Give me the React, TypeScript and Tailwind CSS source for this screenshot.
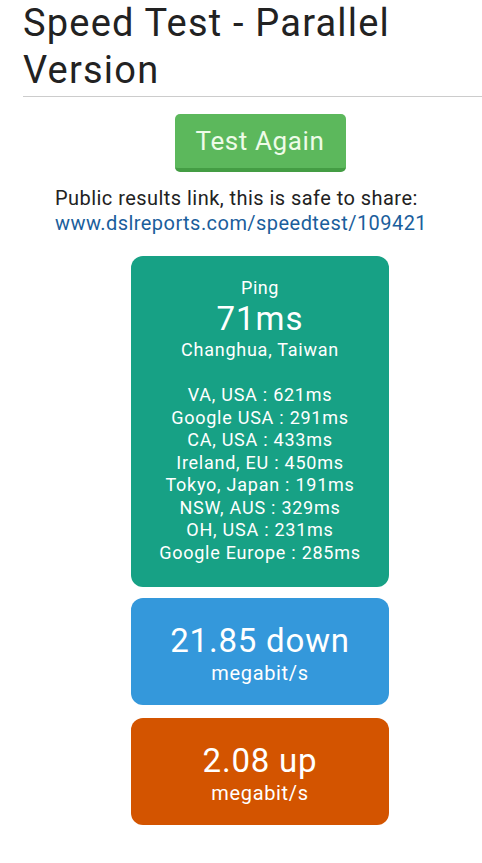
const pings = [
  ["VA, USA", "621ms"],
  ["Google USA", "291ms"],
  ["CA, USA", "433ms"],
  ["Ireland, EU", "450ms"],
  ["Tokyo, Japan", "191ms"],
  ["NSW, AUS", "329ms"],
  ["OH, USA", "231ms"],
  ["Google Europe", "285ms"],
];

function ResultCard({
  color,
  className = "",
  children,
}: {
  color: string;
  className?: string;
  children: React.ReactNode;
}) {
  return (
    <div
      className={`mx-auto w-[258px] rounded-[12px] text-center text-white ${color} ${className}`}
    >
      {children}
    </div>
  );
}

export default function App() {
  return (
    <div className="min-h-[863px] w-[482px] overflow-hidden bg-white font-['Roboto',sans-serif] text-[#222]">
      <div className="ml-[23px] w-[474px]">
        <h1 className="text-[38px] leading-[47px] font-normal tracking-[1.2px] text-[#222]">
          Speed Test - Parallel Version
        </h1>
        <hr className="mt-[2px] border-t border-[#ccc]" />

        <div className="mt-[17px] flex justify-center">
          <button className="h-[58px] w-[171px] rounded-[5px] border-b-4 border-[#449d44] bg-[#5cb85c] text-[26px] tracking-[0.6px] text-[#eefbe8]">
            Test Again
          </button>
        </div>

        <div className="mt-[14px] pl-[32px] text-[20px] leading-[25px] tracking-[0.45px]">
          <p className="text-[#222]">Public results link, this is safe to share:</p>
          <a className="text-[#1a5e9c]" href="#">
            www.dslreports.com/speedtest/109421
          </a>
        </div>

        <div className="mt-[20px] flex flex-col">
          <ResultCard color="bg-[#17a185]">
            <div className="pt-[20px] pb-[23px]">
              <div className="text-[18px] leading-[24px] tracking-[0.5px]">Ping</div>
              <div className="text-[33px] leading-[38px] tracking-[1px]">71ms</div>
              <div className="text-[18px] leading-[24px] tracking-[0.75px]">
                Changhua, Taiwan
              </div>
              <div className="mt-[22px] text-[18px] leading-[22.5px] tracking-[0.75px]">
                {pings.map(([loc, ms]) => (
                  <div key={loc}>
                    {loc} : {ms}
                  </div>
                ))}
              </div>
            </div>
          </ResultCard>

          <ResultCard color="bg-[#3498db]" className="mt-[11px]">
            <div className="pt-[23px] pb-[20px]">
              <div className="text-[33px] leading-[40px] tracking-[0.8px]">21.85 down</div>
              <div className="text-[20px] leading-[24px] tracking-[0.67px]">megabit/s</div>
            </div>
          </ResultCard>

          <ResultCard color="bg-[#d35400]" className="mt-[13px]">
            <div className="pt-[23px] pb-[20px]">
              <div className="text-[33px] leading-[40px] tracking-[0.8px]">2.08 up</div>
              <div className="text-[20px] leading-[24px] tracking-[0.67px]">megabit/s</div>
            </div>
          </ResultCard>
        </div>
      </div>
    </div>
  );
}
